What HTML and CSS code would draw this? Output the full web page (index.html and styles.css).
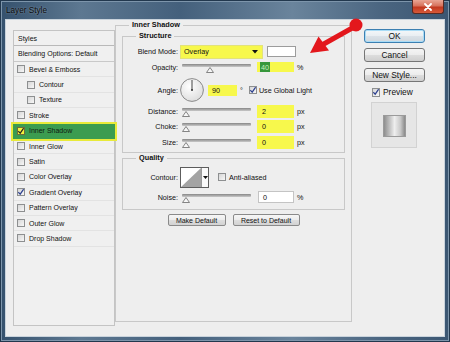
FILE: index.html
```html
<!DOCTYPE html>
<html>
<head>
<meta charset="utf-8">
<title>Layer Style</title>
<link rel="stylesheet" href="styles.css">
</head>
<body>
<div class="window">
  <div class="titlebar">
    <span class="title">Layer Style</span>
    <span class="close"><svg width="10" height="8" viewBox="0 0 10 8"><path d="M2 1 L8 7 M8 1 L2 7" stroke="#fff" stroke-width="1.8" stroke-linecap="round"/></svg></span>
  </div>
  <div class="client">
    <div class="styles-panel">
      <div class="sp-head">Styles</div>
      <div class="sp-blend">Blending Options: Default</div>
      <div class="sp-row"><span class="cb"></span>Bevel &amp; Emboss</div>
      <div class="sp-row sub"><span class="cb"></span>Contour</div>
      <div class="sp-row sub"><span class="cb"></span>Texture</div>
      <div class="sp-row"><span class="cb"></span>Stroke</div>
      <div class="sp-row active"><span class="cb yellow"><svg width="8" height="8" viewBox="0 0 8 8"><path d="M1.3 4.2 L3.2 6.2 L6.6 1.2" fill="none" stroke="#222" stroke-width="1.2"/></svg></span>Inner Shadow</div>
      <div class="sp-row"><span class="cb"></span>Inner Glow</div>
      <div class="sp-row"><span class="cb"></span>Satin</div>
      <div class="sp-row"><span class="cb"></span>Color Overlay</div>
      <div class="sp-row"><span class="cb"><svg width="8" height="8" viewBox="0 0 8 8"><path d="M1.3 4.2 L3.2 6.2 L6.6 1.2" fill="none" stroke="#2b3f8f" stroke-width="1.2"/></svg></span>Gradient Overlay</div>
      <div class="sp-row"><span class="cb"></span>Pattern Overlay</div>
      <div class="sp-row"><span class="cb"></span>Outer Glow</div>
      <div class="sp-row"><span class="cb"></span>Drop Shadow</div>
    </div>

    <fieldset class="group outer">
      <legend>Inner Shadow</legend>
      <div class="gbody">
        <fieldset class="group structure">
          <legend>Structure</legend>
          <div class="form">
            <div class="row r-blend">
              <span class="lbl">Blend Mode:</span>
              <span class="select">Overlay<svg class="caret" width="6" height="4" viewBox="0 0 6 4"><path d="M0 0 H6 L3 3.5 Z" fill="#111"/></svg></span>
              <span class="swatch"></span>
            </div>
            <div class="row r-opacity">
              <span class="lbl">Opacity:</span>
              <span class="slider"><span class="track"></span><svg class="thumb t-opacity" width="8" height="6" viewBox="0 0 8 6"><path d="M4 0.5 L7.5 5.5 H0.5 Z" fill="#f7f7f7" stroke="#777" stroke-width="0.9"/></svg></span>
              <span class="num y"><span class="sel">40</span></span>
              <span class="unit">%</span>
            </div>
            <div class="row r-angle">
              <span class="lbl">Angle:</span>
              <svg class="dial" width="24" height="24" viewBox="0 0 24 24">
                <defs><radialGradient id="dg" cx="40%" cy="35%" r="70%"><stop offset="0" stop-color="#ffffff"/><stop offset="1" stop-color="#dcdcdc"/></radialGradient></defs>
                <circle cx="12" cy="12" r="11.4" fill="url(#dg)" stroke="#8a8a8a" stroke-width="1"/>
                <line x1="12" y1="12" x2="12" y2="2" stroke="#444" stroke-width="1"/>
                <circle cx="12" cy="12" r="1" fill="#333"/>
              </svg>
              <span class="num y n-angle">90</span>
              <span class="deg">°</span>
              <span class="cb cb-global"><svg width="8" height="8" viewBox="0 0 8 8"><path d="M1.3 4.2 L3.2 6.2 L6.6 1.2" fill="none" stroke="#2b3f8f" stroke-width="1.2"/></svg></span>
              <span class="cbl">Use Global Light</span>
            </div>
            <div class="row r-dist">
              <span class="lbl">Distance:</span>
              <span class="slider"><span class="track"></span><svg class="thumb" width="8" height="6" viewBox="0 0 8 6"><path d="M4 0.5 L7.5 5.5 H0.5 Z" fill="#f7f7f7" stroke="#777" stroke-width="0.9"/></svg></span>
              <span class="num y">2</span>
              <span class="unit">px</span>
            </div>
            <div class="row r-choke">
              <span class="lbl">Choke:</span>
              <span class="slider"><span class="track"></span><svg class="thumb" width="8" height="6" viewBox="0 0 8 6"><path d="M4 0.5 L7.5 5.5 H0.5 Z" fill="#f7f7f7" stroke="#777" stroke-width="0.9"/></svg></span>
              <span class="num y">0</span>
              <span class="unit">px</span>
            </div>
            <div class="row r-size">
              <span class="lbl">Size:</span>
              <span class="slider"><span class="track"></span><svg class="thumb" width="8" height="6" viewBox="0 0 8 6"><path d="M4 0.5 L7.5 5.5 H0.5 Z" fill="#f7f7f7" stroke="#777" stroke-width="0.9"/></svg></span>
              <span class="num y">0</span>
              <span class="unit">px</span>
            </div>
          </div>
        </fieldset>

        <fieldset class="group quality">
          <legend>Quality</legend>
          <div class="form">
            <div class="row r-contour">
              <span class="lbl">Contour:</span>
              <span class="contour">
                <svg width="20" height="19" viewBox="0 0 20 19"><rect width="20" height="19" fill="#fff"/><path d="M0 19 L20 0 V19 Z" fill="#a3a3a3"/></svg>
                <span class="c-arrow"><svg width="5" height="3" viewBox="0 0 5 3"><path d="M0 0 H5 L2.5 3 Z" fill="#111"/></svg></span>
              </span>
              <span class="cb cb-aa"></span>
              <span class="cbl">Anti-aliased</span>
            </div>
            <div class="row r-noise">
              <span class="lbl">Noise:</span>
              <span class="slider"><span class="track"></span><svg class="thumb" width="8" height="6" viewBox="0 0 8 6"><path d="M4 0.5 L7.5 5.5 H0.5 Z" fill="#f7f7f7" stroke="#777" stroke-width="0.9"/></svg></span>
              <span class="num w">0</span>
              <span class="unit">%</span>
            </div>
          </div>
        </fieldset>

        <div class="actions">
          <span class="sbtn b-make">Make Default</span>
          <span class="sbtn b-reset">Reset to Default</span>
        </div>
      </div>
    </fieldset>

    <div class="side">
      <span class="btn default">OK</span>
      <span class="btn b-cancel">Cancel</span>
      <span class="btn b-new">New Style...</span>
      <div class="preview-row">
        <span class="cb"><svg width="8" height="8" viewBox="0 0 8 8"><path d="M1.3 4.2 L3.2 6.2 L6.6 1.2" fill="none" stroke="#2b3f8f" stroke-width="1.2"/></svg></span>
        <span>Preview</span>
      </div>
      <div class="preview-box"><span class="swatch-prev"></span></div>
    </div>
  </div>

  <svg class="annot" width="450" height="342" viewBox="0 0 450 342">
    <line x1="354" y1="27" x2="322" y2="45" stroke="#e3171c" stroke-width="5" stroke-linecap="round"/>
    <circle cx="356" cy="25" r="6.5" fill="#e3171c"/>
    <path d="M310 53 L318.5 36.5 L329 50.5 Z" fill="#e3171c"/>
  </svg>
</div>
</body>
</html>
```

FILE: styles.css
```css
* { box-sizing: border-box; }
html, body { margin: 0; padding: 0; }
body {
  width: 450px;
  height: 342px;
  overflow: hidden;
  font-family: "Liberation Sans", Arial, sans-serif;
  color: #111111;
  background: #ffffff;
}

.window {
  position: relative;
  width: 450px;
  height: 342px;
  display: flex;
  flex-direction: column;
  padding: 0 6px 6px;
  background: linear-gradient(to right, #35516d 0%, #5d7891 18%, #44607c 40%, #6a849c 65%, #4a6580 85%, #3b5672 100%);
  box-shadow: inset 0 0 0 1px #22384e, inset 0 0 0 2px #7d95ab;
}

.titlebar {
  height: 20px;
  display: flex;
  align-items: center;
}
.title {
  font-size: 8.2px;
  color: #0a0a0a;
  text-shadow: 0 0 2px rgba(220,230,240,0.5);
}
.close {
  margin-left: auto;
  align-self: flex-start;
  width: 32px;
  height: 14px;
  display: flex;
  align-items: center;
  justify-content: center;
  border: 1px solid #5a2a22;
  border-top: none;
  border-radius: 0 0 3px 3px;
  background: linear-gradient(#e9a594 0%, #d7725c 45%, #c2381f 55%, #d65a3a 100%);
}

.client {
  flex: 1;
  display: flex;
  align-items: flex-start;
  padding-left: 7px;
  background: #eeeeee;
  box-shadow: 0 0 0 1px #c9d3dc;
}

/* Styles list */
.styles-panel {
  width: 102px;
  height: 296px;
  margin-top: 10px;
  border: 1px solid #c4c4c4;
  background: #f0f0f0;
  font-size: 7px;
}
.sp-head {
  height: 15px;
  display: flex;
  align-items: center;
  padding-left: 4px;
  border-bottom: 1px solid #b9b9b9;
}
.sp-blend {
  height: 16px;
  display: flex;
  align-items: center;
  padding-left: 4px;
  border-bottom: 1px solid #c9c9c9;
}
.sp-row {
  height: 15.4px;
  display: flex;
  align-items: center;
  padding-left: 3px;
  border-bottom: 1px solid #e3e3e3;
}
.sp-row.sub { padding-left: 13px; }
.sp-row.active {
  background: #3b9c50;
  color: #101a10;
  margin: 0 -1px;
  padding-left: 4px;
  box-shadow: 0 0 0 2px #e8ea3a;
  position: relative;
  border-bottom-color: transparent;
}

.cb {
  width: 8px;
  height: 8px;
  flex: none;
  margin-right: 4px;
  border: 1px solid #8d8f90;
  background: linear-gradient(135deg, #d6d6d6, #f7f7f7);
  display: inline-flex;
  align-items: center;
  justify-content: center;
  overflow: hidden;
}
.cb svg { flex: none; margin: -1px; }
.cb.yellow { background: #f4f23c; border-color: #6d6d3a; }

/* Group boxes */
fieldset.group {
  margin: 0;
  padding: 0;
  min-width: 0;
  border: 1px solid #c8c8c8;
}
fieldset.group > legend {
  font-weight: bold;
  font-size: 7.3px;
  line-height: 10px;
  padding: 0 3px;
  margin-left: 13px;
  color: #111111;
}
.outer {
  width: 237px;
  margin-top: 7px;
  margin-left: 11px;
}
.gbody {
  height: 291px;
  padding: 1px 6px 0;
  display: flex;
  flex-direction: column;
}
.form {
  padding: 3px 0;
  font-size: 7.2px;
}
.quality { margin-top: 5px; }

.row {
  display: flex;
  align-items: center;
}
.lbl {
  width: 55px;
  flex: none;
  text-align: right;
}
.r-blend { height: 15px; }
.r-opacity { height: 16px; }
.r-angle { height: 30px; }
.r-dist { height: 13px; }
.r-choke { height: 17px; }
.r-size { height: 14px; }
.r-contour { height: 22px; }
.r-noise { height: 18px; }

.select {
  margin-left: 2px;
  width: 83px;
  height: 14px;
  display: flex;
  align-items: center;
  padding-left: 3px;
  padding-right: 4px;
  background: #f7f84c;
  border: 1px solid #e2e27a;
}
.caret { margin-left: auto; }
.swatch {
  margin-left: 4px;
  width: 29px;
  height: 11px;
  background: #ffffff;
  border: 1px solid #9c9c9c;
}

.slider {
  margin-left: 4px;
  width: 69px;
  display: flex;
  flex-direction: column;
  align-self: center;
  margin-top: 2px;
}
.track {
  height: 3px;
  border-radius: 1px;
  background: linear-gradient(#868686, #c9c9c9);
}
.thumb { display: block; margin-top: 0; }
.t-opacity { margin-left: 24px; }

.num {
  margin-left: 6px;
  width: 37px;
  display: flex;
  align-items: center;
  padding-left: 5px;
  flex: none;
}
.num.y { background: #f7f84c; height: 13px; }
.r-opacity .num { height: 10px; padding-left: 3px; }
.sel {
  background: #37973c;
  color: #c8efc0;
  height: 10px;
  padding: 0 1px;
  display: flex;
  align-items: center;
}
.unit { margin-left: 3px; }
.num.w {
  margin-left: 7px;
  width: 36px;
  height: 12px;
  padding-left: 4px;
  background: #ffffff;
  border: 1px solid #c4c4c4;
}

.dial { margin-left: 2px; flex: none; }
.num.n-angle {
  margin-left: 4px;
  width: 29px;
  height: 11px;
  padding-left: 4px;
}
.deg { margin-left: 3px; }
.cb-global { margin-left: 6px; margin-right: 2px; }
.cb-aa { margin-left: 9px; margin-right: 3px; }

.contour {
  margin-left: 2px;
  width: 29px;
  height: 21px;
  display: flex;
  border: 1px solid #5d5d5d;
  background: #fff;
}
.contour svg { display: block; }
.c-arrow {
  flex: 1;
  display: flex;
  align-items: center;
  justify-content: center;
  border-left: 1px solid #9a9a9a;
  background: #fafafa;
}

.actions {
  margin-top: 4px;
  display: flex;
  justify-content: center;
  gap: 7px;
}
.sbtn {
  height: 12px;
  display: flex;
  align-items: center;
  justify-content: center;
  font-size: 7px;
  border: 1px solid #8a8a8a;
  border-radius: 2px;
  background: linear-gradient(#f6f6f6 0%, #ececec 50%, #dedede 51%, #d2d2d2 100%);
}
.b-make { width: 58px; }
.b-reset { width: 67px; }

/* Right column */
.side {
  width: 61px;
  margin-left: 12px;
  margin-top: 9px;
  display: flex;
  flex-direction: column;
  font-size: 8.4px;
}
.btn {
  height: 14px;
  display: flex;
  align-items: center;
  justify-content: center;
  border: 1px solid #767676;
  border-radius: 3px;
  background: linear-gradient(#f4f4f4 0%, #ececec 50%, #dddddd 51%, #cfcfcf 100%);
}
.btn.default {
  border-color: #3c7fb1;
  box-shadow: inset 0 0 0 1px #a9dcf6;
  background: linear-gradient(#f4f7f9 0%, #e9eef2 50%, #dbe2e8 51%, #d0d8de 100%);
}
.b-cancel { margin-top: 5px; }
.b-new { margin-top: 6px; }
.preview-row {
  margin-top: 4px;
  height: 12px;
  display: flex;
  align-items: center;
  padding-left: 8px;
}
.preview-row .cb { margin-right: 3px; height: 9px; }
.preview-box {
  margin-top: 4px;
  margin-left: 7px;
  width: 46px;
  height: 46px;
  border: 1px solid #d2d2d2;
  background: #e6e6e6;
  display: flex;
  align-items: center;
  justify-content: center;
}
.swatch-prev {
  width: 23px;
  height: 22px;
  margin-top: 1px;
  background: linear-gradient(to right, #8e8e8e 0%, #bdbdbd 25%, #eeeeee 50%, #c9c9c9 78%, #8a8a8a 100%);
  border: 1px solid #9a9a9a;
}

.annot {
  position: absolute;
  left: 0;
  top: 0;
  pointer-events: none;
}
```
